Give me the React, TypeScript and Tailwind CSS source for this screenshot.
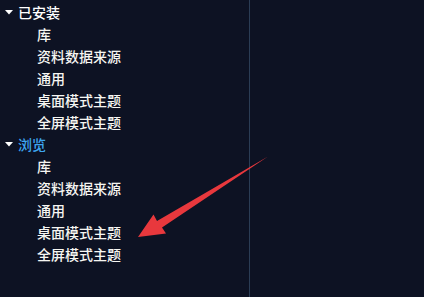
import React from "react";

const Caret = () => (
  <svg width="8" height="6" viewBox="0 0 8 6" className="shrink-0">
    <polygon points="0,1 8,1 4,5.5" fill="#ffffff" />
  </svg>
);

const items = ["库", "资料数据来源", "通用", "桌面模式主题", "全屏模式主题"];

const Section = ({ title, active }: { title: string; active?: boolean }) => (
  <div className="flex flex-col">
    <div className="h-[22px] flex items-center pl-[5px] gap-[5px]">
      <Caret />
      <span className={active ? "text-[#3da6f0]" : "text-white"}>{title}</span>
    </div>
    {items.map((t) => (
      <div key={t} className="h-[22px] flex items-center pl-[37px] text-[#f6f6f2]">
        {t}
      </div>
    ))}
  </div>
);

export default function App() {
  return (
    <div
      className="relative w-[424px] h-[297px] bg-[#0d1223] flex overflow-hidden text-[14px] leading-none font-medium"
      style={{ fontFamily: '"Noto Sans CJK SC", "Noto Sans", sans-serif' }}
    >
      <div className="w-[250px] h-full border-r border-[#2b3d55] pt-[1px]">
        <Section title="已安装" />
        <Section title="浏览" active />
      </div>
      <div className="flex-1" />
      <svg
        className="absolute left-0 top-0 pointer-events-none"
        width="424"
        height="297"
        viewBox="0 0 424 297"
      >
        <polygon
          points="268,156.5 162,227.5 166,233.5 138,237 153.5,214.5 157,221"
          fill="#e8383d"
        />
      </svg>
    </div>
  );
}
